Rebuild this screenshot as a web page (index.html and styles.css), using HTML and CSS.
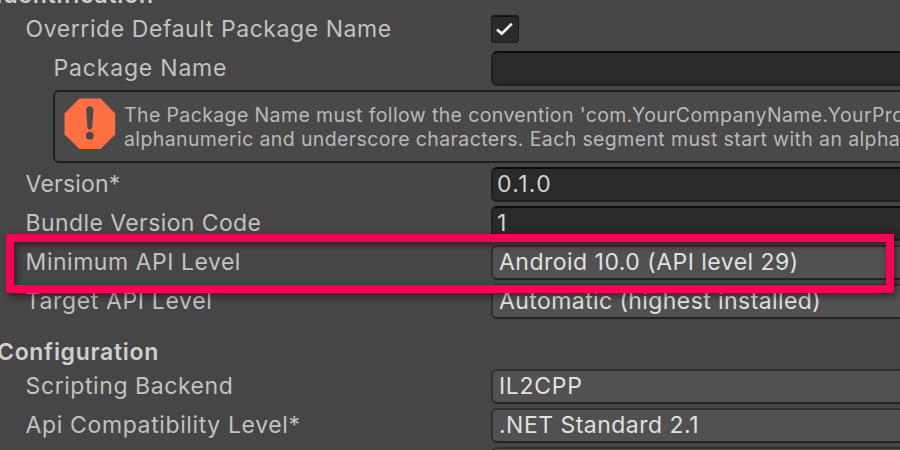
FILE: index.html
```
<!DOCTYPE html>
<html lang="en">
<head>
<meta charset="utf-8">
<title>Player Settings</title>
<link rel="stylesheet" href="styles.css">
</head>
<body>
<main class="panel">
  <h2 class="heading heading-first"><span>Identification</span></h2>
  <div class="row"><label><span class="t-override">Override Default Package Name</span></label>
    <span class="check"><svg viewBox="0 0 28 28" width="28" height="28"><path d="M6 14.5 10.7 18.6 20.8 8.8" fill="none" stroke="#f0f0f0" stroke-width="2.7"/></svg></span></div>
  <div class="row nested"><label><span class="t-package">Package Name</span></label><div class="field input"></div></div>
  <div class="help">
    <svg class="error" viewBox="0 0 52 52" width="52" height="52"><path d="M15.5 0.5h21L51.2 15.5v21L36.5 51h-21L.5 36.5v-21z" fill="#ff7043"/><path d="M22.2 12c0-5 7.2-5 7.2 0l-1.2 17c-.2 3.4-4.6 3.4-4.8 0z" fill="#494949"/><circle cx="25.8" cy="37.7" r="3.9" fill="#494949"/></svg>
    <p><span class="t-help1">The Package Name must follow the convention 'com.YourCompanyName.YourPro</span><br><span class="t-help2">alphanumeric and underscore characters. Each segment must start with an alpha</span></p>
  </div>
  <div class="row"><label><span class="t-version">Version*</span></label><div class="field input"><span class="t-number">0.1.0</span></div></div>
  <div class="row"><label><span class="t-bundle">Bundle Version Code</span></label><div class="field input"><span>1</span></div></div>
  <div class="row"><label><span class="t-min">Minimum API Level</span></label><div class="field select"><span class="t-android">Android 10.0 (API level 29)</span></div></div>
  <div class="row"><label><span class="t-target">Target API Level</span></label><div class="field select"><span class="t-auto">Automatic (highest installed)</span></div></div>
  <h2 class="heading"><span class="t-config">Configuration</span></h2>
  <div class="row"><label><span class="t-script">Scripting Backend</span></label><div class="field select"><span class="t-il">IL2CPP</span></div></div>
  <div class="row"><label><span class="t-api">Api Compatibility Level*</span></label><div class="field select"><span class="t-net">.NET Standard 2.1</span></div></div>
  <div class="row"><label></label><div class="field select"></div></div>
  <div class="highlight"></div>
</main>
</body>
</html>
```
FILE: styles.css
```
* { box-sizing: border-box; }
body { margin: 0; background: #464646; }
.panel {
  position: relative;
  width: 900px;
  height: 450px;
  overflow: hidden;
  background: #464646;
  color: #c2c2c2;
  font: 400 23px/34px Inter, sans-serif;
  letter-spacing: 0.9px;
  white-space: nowrap;
}
.heading {
  height: 46px;
  margin: 0 0 0 -3px;
  padding-top: 14px;
  font-size: 23px;
  line-height: 34px;
  font-weight: 600;
  color: #cfcfcf;
}
.heading-first { display: flex; height: 10px; margin-left: -4px; padding: 0; line-height: 0; letter-spacing: 0.8px; }
.heading-first span { margin-top: -5px; }
.row {
  display: grid;
  grid-template-columns: 465.4px 460px;
  height: 39px;
  padding: 2px 0 0 25.6px;
}
.nested { grid-template-columns: 437.4px 460px; padding-left: 53.6px; }
.field {
  height: 35px;
  border: 2px solid #202020;
  border-radius: 6px;
  line-height: 31px;
  padding-left: 4px;
}
.input { background: #2a2a2a; border-top-color: #0d0d0d; color: #d2d2d2; }
.select { background: #515151; border-color: #303030; border-bottom-color: #242424; color: #e0e0e0; padding-left: 6px; }
.check {
  width: 28px;
  height: 28px;
  margin-top: 3px;
  background: #2a2a2a;
  border-radius: 4px;
  box-shadow: inset 0 0 0 1px #1c1c1c, inset 0 2px 0 #101010;
}
.check svg { display: block; }
.help {
  display: flex;
  width: 870px;
  height: 73px;
  margin: 2px 0 2px 53px;
  padding: 7px 0 0 9px;
  border: 2px solid #202020;
  border-radius: 6px;
  background: #494949;
  color: #b9b9b9;
  font-size: 19.5px;
  line-height: 23.5px;
}
.error { flex: none; margin-top: -1px; }
.help p { margin: 5px 0 0 8px; }
.t-override { letter-spacing: 0.57px; }
.t-package { letter-spacing: 0.8px; }
.t-help1 { letter-spacing: 0.38px; }
.t-help2 { letter-spacing: 0.38px; }
.t-version { letter-spacing: 0.2px; }
.t-number { letter-spacing: 1.3px; }
.t-bundle { letter-spacing: 0.4px; }
.t-min { letter-spacing: 0.52px; }
.t-target { letter-spacing: 0.65px; }
.t-config { letter-spacing: 0.7px; }
.t-script { letter-spacing: 0.57px; }
.t-api { letter-spacing: 0.62px; }
.t-android { letter-spacing: 0.48px; }
.t-auto { letter-spacing: 0.42px; }
.t-il { letter-spacing: 0.7px; }
.t-net { letter-spacing: 0.48px; }
.highlight {
  position: absolute;
  left: 6px;
  top: 234px;
  width: 888px;
  height: 59px;
  border: 8px solid #f90057;
  box-shadow: 2px 3px 7px rgba(0,0,0,.5), inset 2px 3px 7px rgba(0,0,0,.5);
}
```
